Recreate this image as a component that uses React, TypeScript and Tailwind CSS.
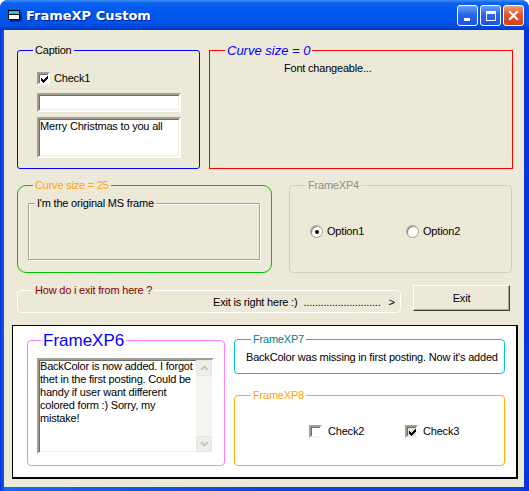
import React from "react";

function Frame({
  className = "",
  legend,
  legendClass = "",
  children,
}: {
  className?: string;
  legend: string;
  legendClass?: string;
  children?: React.ReactNode;
}) {
  return (
    <fieldset className={`border shrink-0 ${className}`}>
      <legend className={`h-[15px] leading-[15px] px-[2px] whitespace-nowrap ${legendClass}`}>{legend}</legend>
      {children}
    </fieldset>
  );
}

function Check({ checked, bg = "bg-white" }: { checked?: boolean; bg?: string }) {
  return (
    <div
      className={`w-[13px] h-[13px] shrink-0 border-2 border-t-[#a19f95] border-l-[#a19f95] border-r-white border-b-[#f4f3ee] shadow-[inset_1px_1px_0_#716f64] ${bg} flex items-center justify-center`}
    >
      {checked && (
        <svg width="7" height="7" viewBox="0 0 7 7" shapeRendering="crispEdges" className="ml-[1px] mt-[1px]">
          <path
            fill="#000"
            d="M0 2h1v3H0z M1 3h1v3H1z M2 4h1v3H2z M3 3h1v3H3z M4 2h1v3H4z M5 1h1v3H5z M6 0h1v3H6z"
          />
        </svg>
      )}
    </div>
  );
}

function Radio({ checked }: { checked?: boolean }) {
  return (
    <div className="w-[13px] h-[13px] shrink-0 rounded-full bg-white border border-[#a3a299] shadow-[inset_1px_1px_0_#8a897f] flex items-center justify-center">
      {checked && <div className="w-[4px] h-[4px] rounded-full bg-black" />}
    </div>
  );
}

const sunken =
  "border-2 border-t-[#a19f95] border-l-[#a19f95] border-r-white border-b-white shadow-[inset_1px_1px_0_#716f64,inset_-1px_-1px_0_#f1efe2]";

function TitleButton({ kind }: { kind: "min" | "max" | "close" }) {
  const base =
    kind === "close"
      ? "bg-[linear-gradient(180deg,#f19a7a_0%,#e0582c_45%,#cc4216_100%)]"
      : "bg-[linear-gradient(180deg,#6a9df8_0%,#2a67ea_45%,#1c55e0_100%)]";
  return (
    <div className={`w-[21px] h-[21px] rounded-[3px] border border-white ${base} flex items-center justify-center`}>
      {kind === "min" && (
        <svg width="13" height="13" viewBox="0 0 13 13" shapeRendering="crispEdges">
          <rect x="3" y="9" width="6" height="3" fill="#fff" />
        </svg>
      )}
      {kind === "max" && (
        <svg width="13" height="13" viewBox="0 0 13 13" shapeRendering="crispEdges">
          <rect x="2" y="2" width="9" height="9" fill="none" stroke="#fff" strokeWidth="1" transform="translate(0.5 0.5)" />
          <rect x="2" y="2" width="10" height="3" fill="#fff" />
        </svg>
      )}
      {kind === "close" && (
        <svg width="13" height="13" viewBox="0 0 13 13">
          <path d="M3 3 L10 10 M10 3 L3 10" stroke="#fff" strokeWidth="2.2" strokeLinecap="square" />
        </svg>
      )}
    </div>
  );
}

function UpDownButton({ up }: { up?: boolean }) {
  return (
    <div className="h-[16px] w-[16px] rounded-[2px] border border-[#e6e5dd] bg-[#efeee8] flex items-center justify-center">
      <svg width="9" height="6" viewBox="0 0 9 6">
        <path
          d={up ? "M1 5 L4.5 1.5 L8 5" : "M1 1 L4.5 4.5 L8 1"}
          fill="none"
          stroke="#c6c5bc"
          strokeWidth="1.8"
        />
      </svg>
    </div>
  );
}

export default function App() {
  return (
    <div className="w-[529px] h-[491px] bg-white font-['Liberation_Sans',Arial,sans-serif] text-[11px] leading-[13px] tracking-[-0.2px] text-black">
      <div className="w-full h-full flex flex-col rounded-t-[8px] overflow-hidden bg-[#0a46da]">
        {/* Title bar */}
        <div className="h-[30px] shrink-0 flex items-center pl-[8px] pr-[5px] bg-[linear-gradient(180deg,#3d8ef8_0%,#0d62ee_10%,#0058ee_35%,#0055e8_75%,#0046d4_92%,#003bc4_100%)]">
          <svg width="14" height="12" viewBox="0 0 14 12" shapeRendering="crispEdges" className="mt-[1px]">
            <rect x="2" y="10" width="11" height="2" fill="#1a2a70" />
            <rect x="12" y="2" width="2" height="10" fill="#1a2a70" />
            <rect x="0.5" y="0.5" width="11" height="9" fill="#fff" stroke="#000" />
            <rect x="1" y="1" width="10" height="3" fill="#25c8d8" />
            <rect x="1" y="4" width="10" height="1" fill="#000" />
          </svg>
          <span className="ml-[4px] mt-[1px] font-['DejaVu_Sans',sans-serif] font-bold text-[13px] tracking-normal text-white [text-shadow:1px_1px_0_#0a1d8c]">
            FrameXP Custom
          </span>
          <div className="ml-auto flex gap-[2px]">
            <TitleButton kind="min" />
            <TitleButton kind="max" />
            <TitleButton kind="close" />
          </div>
        </div>

        {/* Body with window borders */}
        <div className="flex-1 flex pl-[4px] pr-[5px] pb-[4px] bg-[linear-gradient(90deg,#0831d9_0%,#166aee_1%,#0a46da_50%,#0a46da_98%,#0831d9_100%)]">
          <div className="flex-1 bg-[#ece9d8] flex flex-col">
            {/* Row 1 */}
            <div className="flex mt-[13px] ml-[13px]">
              <Frame className="w-[183px] h-[126px] border-[#0000ff] rounded-[3px]" legend="Caption" legendClass="ml-[15px]">
                <div className="pl-[19px]">
                  <div className="flex items-center mt-[14px] h-[13px]">
                    <Check checked />
                    <span className="ml-[4px]">Check1</span>
                  </div>
                  <div className={`mt-[8px] w-[144px] h-[19px] bg-white ${sunken}`} />
                  <div className={`mt-[5px] w-[144px] h-[41px] bg-white pl-[1px] pt-[1px] ${sunken}`}>
                    Merry Christmas to you all
                  </div>
                </div>
              </Frame>
              <Frame
                className="ml-[9px] w-[304px] h-[126px] border-[#ff0000]"
                legend="Curve size = 0"
                legendClass="ml-[15px] italic text-[13px] tracking-normal text-[#0000ff]"
              >
                <div className="pl-[74px] mt-[4px]">Font changeable...</div>
              </Frame>
            </div>

            {/* Row 2 */}
            <div className="flex mt-[9px] ml-[13px]">
              <Frame
                className="w-[255px] h-[95px] border-[#00c000] rounded-[9px]"
                legend="Curve size = 25"
                legendClass="ml-[15px] text-[#ffa500]"
              >
                <fieldset className="ml-[10px] mt-[3px] w-[232px] h-[64px] border border-[#a5a59d] shadow-[inset_1px_1px_0_#fff,1px_1px_0_#fff]">
                  <legend className="ml-[6px] h-[15px] leading-[15px] px-[2px] bg-[#ece9d8] whitespace-nowrap">
                    I'm the original MS frame
                  </legend>
                </fieldset>
              </Frame>
              <Frame
                className="ml-[17px] w-[223px] h-[95px] border-[#d0cec0] rounded-[4px]"
                legend="FrameXP4"
                legendClass="ml-[16px] text-[#8e8e8e]"
              >
                <div className="flex items-center mt-[32px] pl-[20px]">
                  <div className="flex items-center w-[96px]">
                    <Radio checked />
                    <span className="ml-[4px]">Option1</span>
                  </div>
                  <div className="flex items-center">
                    <Radio />
                    <span className="ml-[4px]">Option2</span>
                  </div>
                </div>
              </Frame>
            </div>

            {/* Row 3 */}
            <div className="flex mt-[10px] ml-[13px]">
              <Frame
                className="w-[384px] h-[30px] border-white rounded-[4px]"
                legend="How do i exit from here ?"
                legendClass="ml-[15px] text-[#8b0000]"
              >
                <div className="flex -mt-[2px] pl-[195px] whitespace-nowrap">
                  <span>Exit is right here :)</span>
                  <span className="ml-[6px]">...........................</span>
                  <span className="ml-[8px]">&gt;</span>
                </div>
              </Frame>
              <div className="ml-[12px] mt-[2px] w-[97px] h-[26px] bg-[#ece9d8] border border-t-white border-l-white border-r-[#404040] border-b-[#404040] shadow-[inset_-1px_-1px_0_#aca899] flex items-center justify-center">
                Exit
              </div>
            </div>

            {/* Row 4: white panel */}
            <div className="mt-[12px] ml-[8px] w-[506px] h-[154px] bg-white border-l border-t border-r-2 border-b-2 border-black flex">
              <div className="ml-[14px] mt-[7px]">
                <Frame
                  className="w-[198px] h-[133px] border-[#ff80ff] rounded-[4px]"
                  legend="FrameXP6"
                  legendClass="ml-[13px] text-[17px] tracking-normal text-[#0000ff]"
                >
                  <div className={`ml-[9px] mt-[10px] w-[177px] h-[96px] bg-white flex ${sunken}`}>
                    <div className="flex-1 pl-[1px] whitespace-nowrap overflow-hidden">
                      <div>BackColor is now added. I forgot</div>
                      <div>thet in the first posting. Could be</div>
                      <div>handy if user want different</div>
                      <div>colored form :) Sorry, my</div>
                      <div>mistake!</div>
                    </div>
                    <div className="w-[16px] flex flex-col justify-between bg-[#f6f5f0]">
                      <UpDownButton up />
                      <UpDownButton />
                    </div>
                  </div>
                </Frame>
              </div>
              <div className="ml-[9px] mt-[6px] flex flex-col">
                <Frame
                  className="w-[271px] h-[42px] border-[#00c8c8] rounded-[4px]"
                  legend="FrameXP7"
                  legendClass="ml-[16px] text-[#008080]"
                >
                  <div className="pl-[11px] mt-[4px] whitespace-nowrap">
                    BackColor was missing in first posting. Now it's added
                  </div>
                </Frame>
                <Frame
                  className="mt-[14px] w-[271px] h-[78px] border-[#ffb000] rounded-[4px]"
                  legend="FrameXP8"
                  legendClass="ml-[16px] text-[#ffa500]"
                >
                  <div className="flex items-center mt-[22px] pl-[74px]">
                    <div className="flex items-center w-[96px]">
                      <Check />
                      <span className="ml-[6px]">Check2</span>
                    </div>
                    <div className="flex items-center">
                      <Check checked bg="bg-[#e3e1d6]" />
                      <span className="ml-[5px]">Check3</span>
                    </div>
                  </div>
                </Frame>
              </div>
            </div>
          </div>
        </div>
      </div>
    </div>
  );
}
